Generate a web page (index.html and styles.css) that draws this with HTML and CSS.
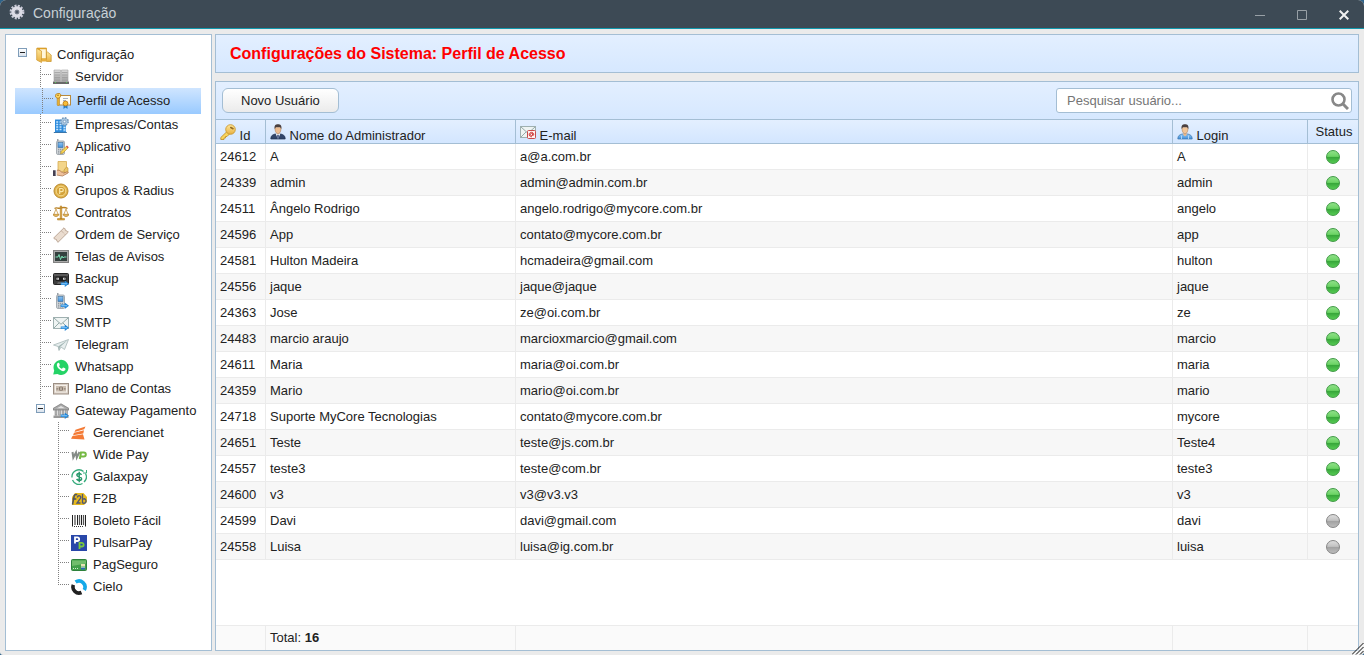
FILE: index.html
```html
<!DOCTYPE html>
<html lang="pt-BR">
<head>
<meta charset="utf-8">
<title>Configuração</title>
<link rel="stylesheet" href="styles.css">
</head>
<body>
<svg class="defs" aria-hidden="true">
  <defs>
    <linearGradient id="gold" x1="0" y1="0" x2="0" y2="1"><stop offset="0" stop-color="#ffe79a"/><stop offset="1" stop-color="#e8b040"/></linearGradient>
    <linearGradient id="steel" x1="0" y1="0" x2="0" y2="1"><stop offset="0" stop-color="#dcdcdc"/><stop offset="1" stop-color="#a0a0a0"/></linearGradient>
    <linearGradient id="blue" x1="0" y1="0" x2="0" y2="1"><stop offset="0" stop-color="#8fc4f2"/><stop offset="1" stop-color="#3f8fdb"/></linearGradient>
    <symbol id="arrow" viewBox="0 0 8 6"><path d="M0 1.800h4V0l4 3-4 3V4.200H0z" fill="#2386d6"/><path d="M.8 3h5.500" stroke="#8fd0ff" stroke-width=".9"/></symbol>
    <symbol id="phone" viewBox="0 0 16 16"><path d="M4 0h1.500v3H4z" fill="#9ba2a8"/><rect x="3.500" y="2" width="8" height="13.500" rx="1.400" fill="#cfd4d8" stroke="#949ca3" stroke-width=".8"/><rect x="5" y="3.500" width="5" height="5" fill="url(#blue)" stroke="#376b99" stroke-width=".6"/><path d="M5 10.300h5M5 12.200h5M5 14h5" stroke="#858d94" stroke-width="1" stroke-dasharray="1.200 .7"/></symbol>
    <symbol id="mail" viewBox="0 0 16 16"><rect x=".5" y="2.500" width="15" height="11" fill="#eff4f3" stroke="#9fb0b0"/><path d="M1 3l7 6.300L15 3M1 13l5.200-5.200M15 13L9.800 7.800" fill="none" stroke="#95aaa9"/></symbol>
  </defs>
</svg>

<header class="titlebar">
  <svg class="icon" viewBox="0 0 16 16"><circle cx="8" cy="8" r="6.200" fill="none" stroke="#c9cad8" stroke-width="2.400" stroke-dasharray="2 1.250"/><circle cx="8" cy="8" r="4" fill="none" stroke="#dcdce6" stroke-width="3.400"/><circle cx="8" cy="8" r="2" fill="#4c5564" stroke="#9b9cab" stroke-width=".7"/></svg>
  <h1 class="titlebar-text">Configuração</h1>
  <div class="controls">
    <button type="button" aria-label="Minimizar"><svg viewBox="0 0 10 10"><path d="M0 5.500h10" stroke="#98a0a6"/></svg></button>
    <button type="button" aria-label="Maximizar"><svg viewBox="0 0 10 10"><path d="M.5.5h9v9h-9z" fill="none" stroke="#98a0a6"/></svg></button>
    <button type="button" aria-label="Fechar"><svg viewBox="0 0 10 10"><path d="M.7.7l8.600 8.600M9.300.7L.7 9.300" stroke="#f1f1f1" stroke-width="2"/></svg></button>
  </div>
</header>

<div class="workspace">
  <nav class="sidebar" aria-label="Configuração">
    <div class="node root">
      <button type="button" class="toggle" aria-label="Recolher Configuração"></button>
      <a href="#" class="node-link">
        <svg class="icon" viewBox="0 0 16 16"><path d="M1 1h9.500v12H3z" fill="#e5a829" stroke="#c98f22" stroke-width=".6"/><path d="M4 2.200h5.800v9H4z" fill="#fff6da"/><path d="M.7 1.500L5.500 4v11.500L.7 13z" fill="url(#gold)" stroke="#d09a2e" stroke-width=".7"/><path d="M10.500 5.500l1-.5 3.700 3v6.500h-4.700z" fill="url(#gold)" stroke="#c8932b" stroke-width=".7"/><path d="M6 12h4.500v2.500H6z" fill="#e7af3b"/></svg>
        Configuração</a>
    </div>
    <ul class="tree">
      <li class="node"><span class="branch"></span><a href="#" class="node-link"><svg class="icon" viewBox="0 0 16 16"><path d="M1 1h6.500v11H1zM8.500 1H15v11H8.500z" fill="url(#steel)" stroke="#a2a2a2" stroke-width=".6"/><path d="M1.500 3.500H7M1.500 6H7M1.500 8.500H7M9 3.500h5.500M9 6h5.500M9 8.500h5.500" stroke="#999" stroke-width=".7"/><path d="M0 12.500h16V15H0z" fill="#686868"/><path d="M2 13.500h1M13 13.500h1" stroke="#55c455"/></svg>Servidor</a></li>
      <li class="node selected"><span class="branch"></span><a href="#" class="node-link" aria-current="page"><svg class="icon" viewBox="0 0 16 16"><rect x="4" y="2.500" width="11.500" height="9.500" fill="#fffdf5" stroke="#b98a3c"/><path d="M8 5.500h5M8 7.500h3" stroke="#8fa0bb" stroke-width=".8"/><path d="M2.200 4.500h2V12l-1 1-1-1z" fill="#f3bd39" stroke="#b67a15" stroke-width=".6"/><path d="M.7 1.500L2.500.5h2.300l1 1.300-.6 2.400-1.500.9H2L.6 4z" fill="#ffd861" stroke="#b67a15" stroke-width=".8"/><circle cx="3" cy="2.300" r=".8" fill="#9c6812"/><path d="M8.500 11.500V16l2-1.500 2 1.500v-4.500z" fill="#267dc5"/><circle cx="10.500" cy="10.500" r="2.400" fill="#f7be38" stroke="#c7851f"/></svg>Perfil de Acesso</a></li>
      <li class="node"><span class="branch"></span><a href="#" class="node-link"><svg class="icon" viewBox="0 0 16 16"><path d="M2 2.500h8v13H2z" fill="#2c8adb"/><path d="M10 8h3v7.500h-3z" fill="#4599e0"/><path d="M3.200 5h2M6.500 5h2M3.200 7.500h2M6.500 7.500h2M3.200 10h2M6.500 10h2M10.500 10.500h2M3.200 12.500h2M6.500 12.500h2M10.500 13h2" stroke="#c5e5ff" stroke-width="1.300"/><path d="M.8 15.500h13" stroke="#3a75a9"/><circle cx="11.500" cy="4.500" r="3.700" fill="#a9c6e0" stroke="#6f94b8" stroke-width="1.400" stroke-dasharray="1.600 1.300"/><circle cx="11.500" cy="4.500" r="1.300" fill="#eef6ff" stroke="#6f94b8" stroke-width=".7"/></svg>Empresas/Contas</a></li>
      <li class="node"><span class="branch"></span><a href="#" class="node-link"><svg class="icon" viewBox="0 0 16 16"><use href="#phone" width="16" height="16"/><path d="M7.500 14.800l.8-2.500 5-5 1.700 1.700-5 5z" fill="#f5d253" stroke="#b58d2b" stroke-width=".6"/><path d="M13 7.600l1-1 1.800 1.700-1 1z" fill="#da4f43"/></svg>Aplicativo</a></li>
      <li class="node"><span class="branch"></span><a href="#" class="node-link"><svg class="icon" viewBox="0 0 16 16"><path d="M5 .5h8.500V11H5z" fill="#f3d58a" stroke="#d5ab50" stroke-width=".8"/><path d="M13.500 6l1.500 1v5h-4V9z" fill="#ebc66a" stroke="#b98b2f" stroke-width=".6"/><path d="M3.500 9.500c2-1 3.500 0 5 1.500 1.500.2 2 .5 2 1.200l3.500-1.400c1.500 0 1.200 1 .5 1.500L9.500 15l-6-1z" fill="#efc19b" stroke="#a56d45" stroke-width=".7"/><path d="M0 9.300h2.800V15H0z" fill="#443f52"/><path d="M3.300 9v5.500" stroke="#fff"/></svg>Api</a></li>
      <li class="node"><span class="branch"></span><a href="#" class="node-link"><svg class="icon" viewBox="0 0 16 16"><circle cx="8" cy="8" r="7" fill="#e1b44d" stroke="#b9892d"/><circle cx="8" cy="8" r="4.800" fill="#d4a23a" stroke="#f4d98c"/><path d="M6.700 11V5.500h2a1.500 1.500 0 010 3.200h-2" fill="none" stroke="#fae8aa" stroke-width="1.200"/></svg>Grupos &amp; Radius</a></li>
      <li class="node"><span class="branch"></span><a href="#" class="node-link"><svg class="icon" viewBox="0 0 16 16"><path d="M7.200 1h1.600v12.500H7.200zM4.500 13.500h7V15h-7z" fill="#dda53d" stroke="#aa771b" stroke-width=".5"/><path d="M1.500 3.500C4 2 5 4 8 3s4-1 6.500.5" fill="none" stroke="#b98124" stroke-width="1.300"/><path d="M3 4L.8 9.500M3 4l2.200 5.500M13 4l-2.200 5.500M13 4l2.200 5.500" stroke="#c79745" stroke-width=".8"/><path d="M0 9.300h6c-.5 3-5.500 3-6 0zM10 9.300h6c-.5 3-5.500 3-6 0z" fill="#e5b85c" stroke="#a97620" stroke-width=".6"/></svg>Contratos</a></li>
      <li class="node"><span class="branch"></span><a href="#" class="node-link"><svg class="icon" viewBox="0 0 16 16"><path d="M.7 11L11 .8l1.300 1.300c-.5 1.200.5 2.200 1.700 1.700l1.300 1.300L5 15.300 3.700 14c.5-1.200-.5-2.200-1.700-1.700z" fill="#eadccf" stroke="#b69f8d" stroke-width=".9"/><path d="M8.500 4l3.500 3.500" stroke="#b69f8d" stroke-dasharray="1 1"/></svg>Ordem de Serviço</a></li>
      <li class="node"><span class="branch"></span><a href="#" class="node-link"><svg class="icon" viewBox="0 0 16 16"><rect x=".5" y="1.500" width="15" height="12" fill="#aaa" stroke="#828282"/><rect x="2" y="3" width="12" height="9" fill="#34403e"/><path d="M2.500 8h2.500l1-2.500 1.500 5L9 7l1 2 1-1h2.500" fill="none" stroke="#79ddb2"/></svg>Telas de Avisos</a></li>
      <li class="node"><span class="branch"></span><a href="#" class="node-link"><svg class="icon" viewBox="0 0 16 16"><rect x=".5" y="2.500" width="15" height="11" rx="1" fill="#3e3e3e" stroke="#242424"/><path d="M1 4h14" stroke="#777"/><rect x="2.500" y="5.500" width="11" height="4.500" rx="1" fill="#1e1e1e"/><path d="M3.500 7.800h2.500M10 7.800h2.500" stroke="#ddd" stroke-width="2"/><path d="M4.500 7.800h.7M11 7.800h.7" stroke="#222"/><path d="M4 13l1-2h6l1 2" fill="#656565"/><use href="#arrow" x="7.500" y="9.500" width="8.500" height="6.500"/></svg>Backup</a></li>
      <li class="node"><span class="branch"></span><a href="#" class="node-link"><svg class="icon" viewBox="0 0 16 16"><use href="#phone" width="16" height="16"/><use href="#arrow" x="7.500" y="9.500" width="8.500" height="6.500"/></svg>SMS</a></li>
      <li class="node"><span class="branch"></span><a href="#" class="node-link"><svg class="icon" viewBox="0 0 16 16"><use href="#mail" width="16" height="16"/><use href="#arrow" x="7.500" y="9.500" width="8.500" height="6.500"/></svg>SMTP</a></li>
      <li class="node"><span class="branch"></span><a href="#" class="node-link"><svg class="icon" viewBox="0 0 16 16"><path d="M.5 8L15.500 2.500l-4 10-3.500-2.500L6 13.500l-.8-4z" fill="#e7eeee" stroke="#a7b8b8" stroke-width=".8"/><path d="M15 2.800L5.200 9.500l.8 4 1-3.500z" fill="#9fb3b2"/></svg>Telegram</a></li>
      <li class="node"><span class="branch"></span><a href="#" class="node-link"><svg class="icon" viewBox="0 0 16 16"><path d="M.2 15.500L1.200 11.500A7.500 7.500 0 114.500 15z" fill="#25d366"/><path d="M5.200 3.700c-2.400 1.300-1.200 4.300.9 6.300s4.900 3.200 6.300.8c.3-1 .2-1.200-2.200-2.200-.8.500-.9 1.300-1.500 1.100C7.500 9.200 6.500 8.200 6.100 7.200c0-.5.900-.8.700-1.500-.5-1.500-.6-2.300-1.600-2z" fill="#fff"/></svg>Whatsapp</a></li>
      <li class="node"><span class="branch"></span><a href="#" class="node-link"><svg class="icon" viewBox="0 0 16 16"><rect x=".5" y="2.500" width="15" height="10.500" fill="#d9cfc5" stroke="#9c8f84"/><rect x="2.500" y="4.500" width="11" height="6.500" fill="#cabdb0" stroke="#f5f0ea"/><circle cx="8" cy="7.800" r="2.200" fill="#85776a"/><path d="M8 6.300v3" stroke="#eee4d9"/><path d="M3.500 7.800h1.300M11.200 7.800h1.300" stroke="#7e7266" stroke-width="1.300"/></svg>Plano de Contas</a></li>
    </ul>
    <div class="node group">
      <button type="button" class="toggle" aria-label="Recolher Gateway Pagamento"></button>
      <a href="#" class="node-link"><svg class="icon" viewBox="0 0 16 16"><path d="M0 5.500L8 .8l8 4.700V7H0z" fill="#aaa" stroke="#747474" stroke-width=".7"/><path d="M4 5.300L8 3l4 2.300z" fill="#e3e3e3"/><path d="M2 7.200h2v5H2zM5.500 7.200h2v5h-2zM9 7.200h2v5H9zM12.500 7.200h2v5h-2z" fill="#bababa" stroke="#777" stroke-width=".5"/><path d="M.5 12.500h15V15H.5z" fill="#999"/><use href="#arrow" x="7.500" y="9.500" width="8.500" height="6.500"/></svg>Gateway Pagamento</a>
    </div>
    <ul class="tree subtree">
      <li class="node"><span class="branch"></span><a href="#" class="node-link"><svg class="icon" viewBox="0 0 16 16"><path d="M14.500 1.500L4.500 4.700 3.500 7l9.700-2.800zM13 5.300L3 7.800 2 10.300l10.300-1.900zM12 9.300L1.500 11 0 13.800l13.500.6z" fill="#f47a35"/></svg>Gerencianet</a></li>
      <li class="node"><span class="branch"></span><a href="#" class="node-link"><svg class="icon" viewBox="0 0 16 16"><path d="M1.500 5l.8 5.500L5 5.500l.8 5L8.500 5" fill="none" stroke="#858b87" stroke-width="2"/><path d="M8.800 12l1.200-6.500h2.800a1.900 1.900 0 010 4H9.500" fill="none" stroke="#75b943" stroke-width="2"/></svg>Wide Pay</a></li>
      <li class="node"><span class="branch"></span><a href="#" class="node-link"><svg class="icon" viewBox="0 0 16 16"><path d="M12.500 2.500A7 7 0 001 8.500M1.500 11a7 7 0 0010 3.500M13 13a7 7 0 001.500-8.500" fill="none" stroke="#36ab7c" stroke-width="1.300"/><path d="M10.500 5.800C9.500 4 5.800 4.200 5.900 6.300c.1 2 4.700 1.200 4.700 3.500 0 2-3.800 2.200-5 .2M8.200 2.800v10.400" fill="none" stroke="#27986b" stroke-width="1.500"/><path d="M12 4h3.500V1" fill="none" stroke="#36ab7c"/></svg>Galaxpay</a></li>
      <li class="node"><span class="branch"></span><a href="#" class="node-link"><svg class="icon" viewBox="0 0 16 16"><path d="M1 6l3-4h8.500L16 6v5l-3 3H1z" fill="#e6b91d"/><path d="M1.500 13.500L3.200 5q.3-1.800 3-1.300M1.500 8h3.800" fill="none" stroke="#4c5264" stroke-width="1.500"/><path d="M6.200 6.500c1-3 4.700-1.600 3.200.8L6 12h3.500M11.500 3v9c3 1 4.200-1.600 3-3.500-1-1.200-2.300-.7-3 0" fill="none" stroke="#505672" stroke-width="1.300"/></svg>F2B</a></li>
      <li class="node"><span class="branch"></span><a href="#" class="node-link"><svg class="icon" viewBox="0 0 16 16"><path d="M1.500 2v11.500M6.500 2v10M10.500 2v10M14.500 2v11.500" stroke="#222"/><path d="M4 2v10M8.500 2v10M12.500 2v10" stroke="#555" stroke-width="1.300"/><path d="M3 13.500h10" stroke="#333" stroke-dasharray="1 1"/></svg>Boleto Fácil</a></li>
      <li class="node"><span class="branch"></span><a href="#" class="node-link"><svg class="icon" viewBox="0 0 16 16"><path d="M0 0h16v16H0z" fill="#2947a9"/><path d="M4 8.500V2.300h2.300a1.800 1.800 0 010 3.700H4" fill="none" stroke="#fff" stroke-width="1.800"/><path d="M8.500 14V7.800h2.300a1.800 1.800 0 010 3.700H8.500" fill="none" stroke="#79ca3d" stroke-width="1.800"/></svg>PulsarPay</a></li>
      <li class="node"><span class="branch"></span><a href="#" class="node-link"><svg class="icon" viewBox="0 0 16 16"><rect x=".5" y="2.500" width="15" height="11" rx="1" fill="#43a04a" stroke="#2e813b"/><path d="M1 3.500h14v3L1 9z" fill="#71bd6c"/><path d="M2 11.500h6" stroke="#d0efce" stroke-dasharray="1 1"/><path d="M10 7h4v2h-4z" fill="#e8e2b4"/><path d="M10 10.500h4v2h-4z" fill="#2869b6"/><path d="M10 10h4" stroke="#eee"/></svg>PagSeguro</a></li>
      <li class="node"><span class="branch"></span><a href="#" class="node-link"><svg class="icon" viewBox="0 0 16 16"><path d="M4.600 3.100A6 6 0 0113.200 11" fill="none" stroke="#15a9e8" stroke-width="3.600"/><path d="M2.400 5.900A6 6 0 0010.500 13.500" fill="none" stroke="#222" stroke-width="3.600"/></svg>Cielo</a></li>
    </ul>
  </nav>

  <main class="main">
    <div class="heading-panel"><h2 class="heading">Configurações do Sistema: Perfil de Acesso</h2></div>

    <section class="grid-panel">
      <div class="toolbar">
        <button type="button" class="new-user">Novo Usuário</button>
        <form class="search">
          <input type="text" class="search-input" placeholder="Pesquisar usuário..." aria-label="Pesquisar usuário">
          <button type="button" class="search-button" aria-label="Pesquisar"><svg viewBox="0 0 18 18"><circle cx="7.500" cy="7.500" r="6" fill="none" stroke="#888" stroke-width="2.600"/><path d="M12 12l5 5" stroke="#888" stroke-width="3"/></svg></button>
        </form>
      </div>

      <table class="grid">
        <colgroup><col class="col-id"><col class="col-name"><col><col class="col-login"><col class="col-status"></colgroup>
        <thead>
          <tr>
            <th><svg class="icon" viewBox="0 0 16 16"><path d="M7 7.500L.8 13.500V15.500H4V14h1.500v-1.500H7l2.500-2.500z" fill="#f9d45c" stroke="#bd8a21" stroke-width=".8"/><circle cx="10.500" cy="5.500" r="4.800" fill="url(#gold)" stroke="#c99a34" stroke-width=".9"/><path d="M10.800 3.500l2.200 1.200" stroke="#936b22" stroke-width="1.600" stroke-linecap="round"/></svg> Id</th>
            <th><svg class="icon" viewBox="0 0 16 16"><path d="M.8 15c0-3.500 2-4.500 4.500-5h5.400c2.500.5 4.500 1.500 4.500 5z" fill="#31456a" stroke="#213252" stroke-width=".7"/><path d="M5.500 9.500L8 15l2.500-5.500z" fill="#f0f4fa"/><path d="M8 10.500l1 1-.5 3.500h-1L7 11.500z" fill="#4a5a86"/><path d="M5 3.500h6c.2 3.500-1 6-3 6.500-2-.5-3.200-3-3-6.500z" fill="#edbd91" stroke="#a77750" stroke-width=".5"/><path d="M4.700 5C4 1.500 5.500.3 8 .3S12 1.500 11.300 5L10 3H6z" fill="#4a4040"/></svg> Nome do Administrador</th>
            <th><svg class="icon" viewBox="0 0 16 16"><use href="#mail" width="16" height="16"/><rect x="7.500" y="6.500" width="8" height="8" rx="1" fill="#fff1ef" stroke="#c94b4b"/><circle cx="11.500" cy="10.500" r="1.200" fill="none" stroke="#c33"/><path d="M12.700 9.300v2c1.500.8 1.500-3-1.200-3-3.200 0-3.200 4.800.5 4.500" fill="none" stroke="#c33" stroke-width=".9"/></svg> E-mail</th>
            <th><svg class="icon" viewBox="0 0 16 16"><path d="M.8 15c0-3.500 2-4.500 4.500-5h5.400c2.500.5 4.500 1.500 4.500 5z" fill="url(#blue)" stroke="#3f77ad" stroke-width=".7"/><path d="M5.500 9.700L8 12.500l2.500-2.800z" fill="#edbd91"/><path d="M4.500 11.500V15M11.500 11.500V15" stroke="#d5ebff" stroke-width=".7"/><path d="M5 3.500h6c.2 3.500-1 6-3 6.500-2-.5-3.200-3-3-6.500z" fill="#f1c598" stroke="#a77750" stroke-width=".5"/><path d="M4.700 5C4 1.500 5.500.3 8 .3S12 1.500 11.300 5L10 3H6z" fill="#4a4040"/></svg> Login</th>
            <th class="status">Status</th>
          </tr>
        </thead>
        <tbody>
          <tr><td>24612</td><td>A</td><td>a@a.com.br</td><td>A</td><td class="status"><span class="ball" role="img" aria-label="Ativo"></span></td></tr>
          <tr><td>24339</td><td>admin</td><td>admin@admin.com.br</td><td>admin</td><td class="status"><span class="ball" role="img" aria-label="Ativo"></span></td></tr>
          <tr><td>24511</td><td>Ângelo Rodrigo</td><td>angelo.rodrigo@mycore.com.br</td><td>angelo</td><td class="status"><span class="ball" role="img" aria-label="Ativo"></span></td></tr>
          <tr><td>24596</td><td>App</td><td>contato@mycore.com.br</td><td>app</td><td class="status"><span class="ball" role="img" aria-label="Ativo"></span></td></tr>
          <tr><td>24581</td><td>Hulton Madeira</td><td>hcmadeira@gmail.com</td><td>hulton</td><td class="status"><span class="ball" role="img" aria-label="Ativo"></span></td></tr>
          <tr><td>24556</td><td>jaque</td><td>jaque@jaque</td><td>jaque</td><td class="status"><span class="ball" role="img" aria-label="Ativo"></span></td></tr>
          <tr><td>24363</td><td>Jose</td><td>ze@oi.com.br</td><td>ze</td><td class="status"><span class="ball" role="img" aria-label="Ativo"></span></td></tr>
          <tr><td>24483</td><td>marcio araujo</td><td>marcioxmarcio@gmail.com</td><td>marcio</td><td class="status"><span class="ball" role="img" aria-label="Ativo"></span></td></tr>
          <tr><td>24611</td><td>Maria</td><td>maria@oi.com.br</td><td>maria</td><td class="status"><span class="ball" role="img" aria-label="Ativo"></span></td></tr>
          <tr><td>24359</td><td>Mario</td><td>mario@oi.com.br</td><td>mario</td><td class="status"><span class="ball" role="img" aria-label="Ativo"></span></td></tr>
          <tr><td>24718</td><td>Suporte MyCore Tecnologias</td><td>contato@mycore.com.br</td><td>mycore</td><td class="status"><span class="ball" role="img" aria-label="Ativo"></span></td></tr>
          <tr><td>24651</td><td>Teste</td><td>teste@js.com.br</td><td>Teste4</td><td class="status"><span class="ball" role="img" aria-label="Ativo"></span></td></tr>
          <tr><td>24557</td><td>teste3</td><td>teste@com.br</td><td>teste3</td><td class="status"><span class="ball" role="img" aria-label="Ativo"></span></td></tr>
          <tr><td>24600</td><td>v3</td><td>v3@v3.v3</td><td>v3</td><td class="status"><span class="ball" role="img" aria-label="Ativo"></span></td></tr>
          <tr><td>24599</td><td>Davi</td><td>davi@gmail.com</td><td>davi</td><td class="status"><span class="ball off" role="img" aria-label="Inativo"></span></td></tr>
          <tr><td>24558</td><td>Luisa</td><td>luisa@ig.com.br</td><td>luisa</td><td class="status"><span class="ball off" role="img" aria-label="Inativo"></span></td></tr>
        </tbody>
      </table>

      <table class="grid totals">
        <colgroup><col class="col-id"><col class="col-name"><col><col class="col-login"><col class="col-status"></colgroup>
        <tbody><tr><td></td><td>Total: <b>16</b></td><td></td><td></td><td></td></tr></tbody>
      </table>
    </section>
  </main>
</div>
<svg class="grip" viewBox="0 0 12 12" aria-hidden="true"><path d="M0 11.500L11.500 0M4 11.500L11.500 4M8 11.500L11.500 8" stroke="#111" fill="none"/><path d="M1.500 12L12 1.500M5.500 12L12 5.500" stroke="#fff" fill="none"/></svg>
</body>
</html>
```
FILE: styles.css
```css
* { box-sizing: border-box; }

html { background: #2d6289; }

body {
  margin: 0;
  min-height: 100vh;
  display: flex;
  flex-direction: column;
  border-radius: 6px 6px 3px 3px;
  overflow: hidden;
  background: #ebebeb;
  color: #222;
  font: 13px/15px "Liberation Sans", Arial, sans-serif;
}

button, input { font: inherit; color: inherit; }

button {
  padding: 0;
  border: 0;
  background: none;
  cursor: pointer;
}

.defs { position: absolute; width: 0; height: 0; }

.icon { width: 16px; height: 16px; flex: none; }

/* Title bar */
.titlebar {
  display: flex;
  align-items: flex-start;
  gap: 8px;
  height: 29px;
  padding: 4px 15px 0 9px;
  background: #3d4a55;
  border-bottom: 1px solid #1299ad;
}

.titlebar-text {
  margin: 0;
  color: #c7d0d6;
  font-size: 14px;
  font-weight: normal;
  line-height: 18px;
}

.controls {
  display: flex;
  gap: 32px;
  margin-left: auto;
  padding-top: 6px;
}

.controls svg { display: block; width: 10px; height: 10px; }

/* Layout */
.workspace {
  flex: 1;
  display: flex;
  gap: 3px;
  padding: 5px 5px 4px;
}

.sidebar, .heading-panel, .grid-panel { border: 1px solid #a4bed4; }

.sidebar {
  flex: none;
  width: 207px;
  padding: 9px 10px 9px 9px;
  background: #fff;
}

.main {
  flex: 1;
  min-width: 0;
  display: flex;
  flex-direction: column;
  gap: 8px;
}

/* Tree */
.tree { margin: 0; padding: 0; list-style: none; }

.node {
  display: flex;
  align-items: center;
  height: 22px;
  padding-left: 25px;
}

.subtree .node { padding-left: 43px; }

.node-link {
  display: flex;
  align-items: center;
  gap: 6px;
  padding-bottom: 1px;
  color: #222;
  text-decoration: none;
  white-space: nowrap;
}

.branch {
  align-self: stretch;
  width: 11px;
  margin-right: 2px;
  background:
    repeating-linear-gradient(#808080 0 1px, transparent 1px 2px) 0 0 / 1px 100% no-repeat,
    repeating-linear-gradient(90deg, #808080 0 1px, transparent 1px 2px) 0 8px / 100% 1px no-repeat;
}

.subtree .node:last-child .branch { background-size: 1px 9px, 100% 1px; }

.node.selected {
  height: 26px;
  padding-left: 27px;
  background: linear-gradient(#cfe5ff, #99caff);
}

.selected .branch { background-position: 0 0, 0 10px; }

.toggle {
  width: 9px;
  height: 9px;
  border: 1px solid #7f9db9;
  background:
    linear-gradient(#222, #222) center / 5px 1px no-repeat,
    linear-gradient(#fff, #d9e2ec);
}

.root { padding-left: 3px; }
.root .toggle { margin: 0 9px 5px 0; }
.root .node-link { gap: 5px; }
.group { padding-left: 21px; }
.group .toggle { margin: 0 8px 5px 0; }

/* Panels */
.heading-panel {
  padding: 9px 14px;
  background: linear-gradient(#e3efff, #d6e8ff);
}

.heading {
  margin: 0;
  color: #f00;
  font-size: 16px;
  line-height: 19px;
}

.grid-panel {
  flex: 1;
  display: flex;
  flex-direction: column;
  background: #fff;
}

.toolbar {
  display: flex;
  justify-content: space-between;
  padding: 6px;
  background: linear-gradient(#e3efff, #d6e8ff);
}

.new-user {
  height: 25px;
  padding: 0 18px;
  border: 1px solid #a4bed4;
  border-radius: 6px;
  background: linear-gradient(#fff, #ebebeb);
}

.search {
  display: flex;
  align-items: center;
  width: 296px;
  height: 25px;
  padding: 0 2px 0 10px;
  border: 1px solid #a4bed4;
  border-radius: 3px;
  background: #fff;
}

.search-input {
  flex: 1;
  min-width: 0;
  padding: 0;
  border: 0;
  outline: 0;
  background: none;
}

.search-input::placeholder { color: #757575; }

.search-button svg { display: block; width: 18px; height: 18px; }

/* Grid */
.grid {
  width: 100%;
  table-layout: fixed;
  border-collapse: separate;
  border-spacing: 0;
}

.col-id { width: 50px; }
.col-name { width: 250px; }
.col-login { width: 135px; }
.col-status { width: 50px; }

.grid th {
  height: 25px;
  padding: 4px 0 0 4px;
  border: solid #a4bed4;
  border-width: 1px 1px 1px 0;
  background: linear-gradient(#e3efff, #d3e6ff);
  font-weight: normal;
  text-align: left;
  vertical-align: top;
  white-space: nowrap;
}

.grid td {
  height: 26px;
  padding: 0 4px;
  border: solid #ebebeb;
  border-width: 0 1px 1px 0;
}

.grid tr > :last-child { border-right: 0; }

.grid tbody tr:nth-child(even) { background: #f7f7f7; }

.grid .status { padding-left: 0; padding-right: 0; text-align: center; }
.grid th.status { padding-left: 2px; }

.ball {
  display: block;
  width: 14px;
  height: 14px;
  margin: 0 auto;
  border: 1px solid #3f9a45;
  border-radius: 50%;
  background: linear-gradient(#8fe088 0%, #6cd465 45%, #37a63a 52%, #55cb52 100%);
}

.ball.off {
  border-color: #858585;
  background: linear-gradient(#dcdcdc 0%, #c2c2c2 45%, #a2a2a2 52%, #bcbcbc 100%);
}

.totals {
  margin-top: auto;
  background: #fafafa;
}

.totals td {
  height: 25px;
  padding-bottom: 2px;
  border-width: 1px 1px 0 0;
}

.grip {
  position: absolute;
  right: 0;
  bottom: 0;
  width: 12px;
  height: 12px;
}
```
